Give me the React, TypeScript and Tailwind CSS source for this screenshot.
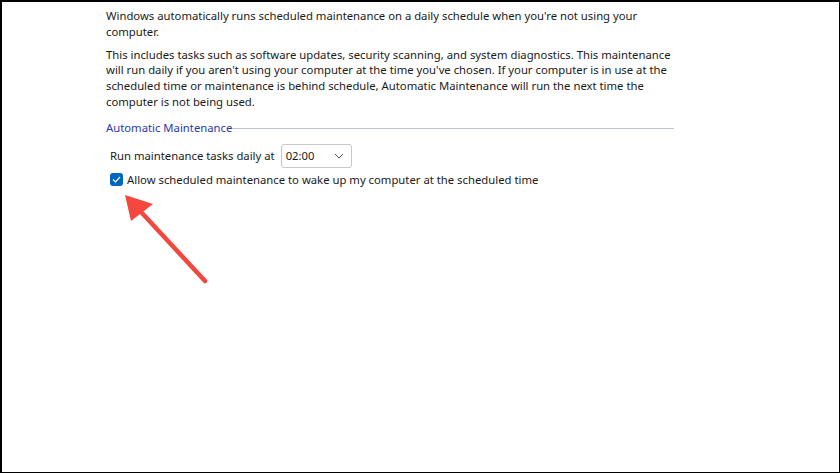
import React from 'react';

const font = { fontFamily: '"Segoe UI", "Noto Sans", "Open Sans", sans-serif' };

// Red callout arrow pointing at the checkbox
const Arrow = () => (
  <svg className="absolute left-0 top-0" width="840" height="473">
    <line x1="203" y1="279" x2="140" y2="211" stroke="#f4473d" strokeWidth="4.5" strokeLinecap="round" />
    <polygon points="123,193 129,219 151,202" fill="#f4473d" />
  </svg>
);

const App = () => {
  return (
    <div className="relative w-[840px] h-[473px] bg-white border-t-2 border-l-2 border-r border-b border-black overflow-hidden" style={font}>
      <div className="pl-[104px] pt-[6px] w-[680px] text-[11.3px] leading-[15.8px] text-[#1a1a1a]">
        <p className="w-[560px]">
          Windows automatically runs scheduled maintenance on a daily schedule when you're not using your computer.
        </p>
        <p className="w-[570px] mt-[7px]">
          This includes tasks such as software updates, security scanning, and system diagnostics. This maintenance will run daily if you aren't using your computer at the time you've chosen. If your computer is in use at the scheduled time or maintenance is behind schedule, Automatic Maintenance will run the next time the computer is not being used.
        </p>

        <div className="mt-[10px] flex items-center w-[568px]">
          <span className="text-[#2a3aa8]">Automatic Maintenance</span>
          <div className="flex-1 h-px bg-[#b9c6d4] mt-[1px]" />
        </div>

        <div className="flex items-center mt-[8px] pl-[4px]">
          <span>Run maintenance tasks daily at</span>
          <div className="ml-[6px] w-[71px] h-[24px] border border-[#c8c8c8] rounded-[3px] flex items-center justify-between pl-[4px] pr-[7px]">
            <span className="text-[#1a1a1a]">02:00</span>
            <svg width="10" height="6" viewBox="0 0 10 6">
              <path d="M1 1 L5 5 L9 1" fill="none" stroke="#555" strokeWidth="1" />
            </svg>
          </div>
        </div>

        <div className="flex items-center mt-[4px] pl-[4px]">
          <div className="w-[13px] h-[13px] rounded-[3px] bg-[#0067c0] flex items-center justify-center">
            <svg width="9" height="7" viewBox="0 0 9 7">
              <path d="M1 3.5 L3.5 6 L8 1" fill="none" stroke="white" strokeWidth="1.2" />
            </svg>
          </div>
          <span className="ml-[4px]">Allow scheduled maintenance to wake up my computer at the scheduled time</span>
        </div>
      </div>
      <Arrow />
    </div>
  );
};

export default App;
